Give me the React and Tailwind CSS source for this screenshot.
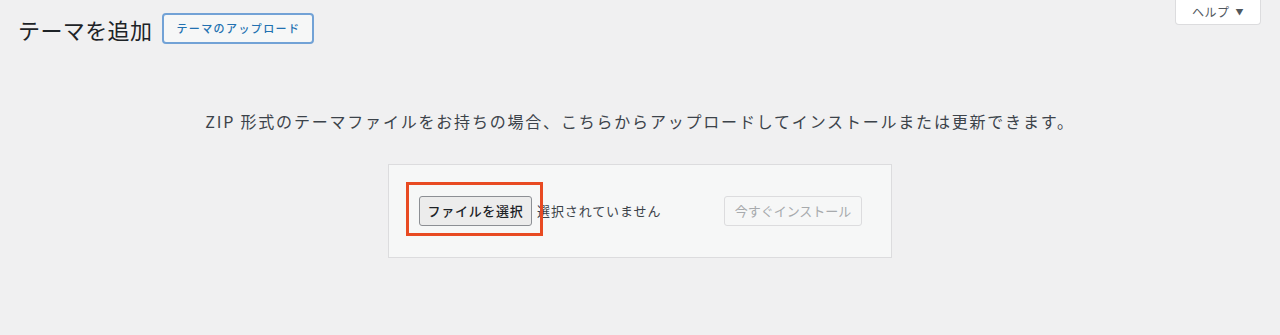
export default function App() {
  return (
    <div
      className="relative h-[335px] w-[1280px] overflow-hidden bg-[#f0f0f1] text-[#3c434a]"
      style={{ fontFamily: '"Noto Sans CJK JP", "Noto Sans", sans-serif' }}
    >
      <div className="flex justify-end pr-[19px]">
        <button className="flex h-[25px] w-[86px] items-center justify-center gap-[6px] rounded-b-[4px] border border-t-0 border-[#dcdcde] bg-white text-[12px] tracking-[0.5px] text-[#50575e]">
          ヘルプ
          <span className="text-[8px]">▼</span>
        </button>
      </div>

      <div className="-mt-[12px] flex items-center gap-[10px] pl-[18px]">
        <h1 className="text-[22px] font-normal leading-[30px] tracking-[0.4px] text-[#1d2327]">テーマを追加</h1>
        <button className="h-[31px] w-[152px] rounded-[4px] border-2 border-[#72a2d6] bg-[#f6f7f7] text-[11px] font-medium tracking-[1.4px] text-[#2271b1]">
          テーマのアップロード
        </button>
      </div>

      <p className="mt-[67px] text-center text-[16px] leading-[20px] tracking-[1.8px] text-[#3c434a]">
        ZIP 形式のテーマファイルをお持ちの場合、こちらからアップロードしてインストールまたは更新できます。
      </p>

      <div className="mx-auto mt-[33px] flex h-[94px] w-[504px] items-center justify-between border border-[#dcdcde] bg-[#f6f7f7] pl-[30px] pr-[29px]">
        <div className="relative flex items-center gap-[5px]">
          <button className="h-[30px] w-[113px] rounded-[3px] border border-[#8c8f94] bg-[#ececec] text-[13px] font-medium tracking-[0.7px] text-[#1d2327]">
            ファイルを選択
          </button>
          <span className="text-[13px] tracking-[0.9px] text-[#3c434a]">選択されていません</span>
          <div className="pointer-events-none absolute left-[-13px] top-[-14px] h-[54px] w-[137px] border-[3px] border-[#e84a22]" />
        </div>
        <button
          disabled
          className="h-[30px] w-[138px] rounded-[3px] border border-[#dcdcde] bg-[#f6f7f7] text-[13px] text-[#a7aaad]"
        >
          今すぐインストール
        </button>
      </div>
    </div>
  )
}
